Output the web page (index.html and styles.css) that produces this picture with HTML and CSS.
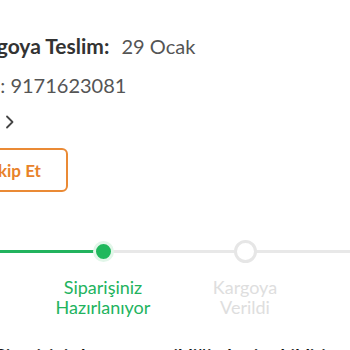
FILE: index.html
```html
<!DOCTYPE html>
<html>

<head>
  <title>Sipariş Detayı</title>
  <meta charset="UTF-8">
  <meta name="viewport" content="width=device-width, initial-scale=1.0">
  <link rel="stylesheet" href="styles.css">
</head>

<body>
  <div class="order">
    <div class="info">
      <p class="row row-date"><b>Kargoya Teslim:</b> 29 Ocak</p>
      <p class="row row-no">No: 9171623081</p>
      <div class="row row-more">
        <svg width="10" height="14" viewBox="0 0 10 14">
          <path d="M2 1.5 L7.5 7 L2 12.5" fill="none" stroke="#444" stroke-width="1.8" stroke-linecap="round" stroke-linejoin="round" />
        </svg>
      </div>
      <button class="track">Takip Et</button>
    </div>

    <ol class="steps">
      <li class="step done"><span class="dot"></span><span class="label">Sipariş<br>Alındı</span></li>
      <li class="step current"><span class="dot"></span><span class="label">Siparişiniz<br>Hazırlanıyor</span></li>
      <li class="step"><span class="dot"></span><span class="label">Kargoya<br>Verildi</span></li>
      <li class="step"><span class="dot"></span><span class="label">Teslim<br>Edildi</span></li>
    </ol>

    <p class="note">Siparişiniz kargoya verildiğinde size bildirim göndereceğiz.</p>
  </div>
</body>

</html>
```

FILE: styles.css
```css
body {
  margin: 0;
  padding: 0;
  background-color: #fff;
  font-family: Lato, "Open Sans", sans-serif;
  overflow: hidden;
}

.order {
  width: 350px;
  height: 350px;
  overflow: hidden;
}

.info {
  margin-left: -28px;
  padding-top: 34px;
}

.row {
  margin: 0;
  color: #555;
}

.row-date {
  font-size: 20px;
  line-height: 24px;
  text-indent: -8px;
}

.row-date b {
  color: #333;
  font-size: 21px;
  font-weight: bold;
  margin-right: 7px;
}

.row-no {
  margin-top: 14px;
  font-size: 20px;
  line-height: 26px;
  text-indent: 2px;
}

.row-more {
  margin-top: 17px;
  height: 20px;
  padding-left: 33px;
}

.row-more svg {
  display: block;
}

.track {
  display: block;
  margin-top: 13px;
  height: 44px;
  padding: 0 25px 0 7px;
  border: 2px solid #ea8a35;
  border-radius: 6px;
  background-color: #fff;
  color: #e8822a;
  font-family: inherit;
  font-size: 17px;
  font-weight: bold;
}

.steps {
  list-style: none;
  margin: 47px 0 0 -110px;
  padding: 0;
  display: grid;
  grid-template-columns: repeat(4, 142px);
}

.step {
  position: relative;
  display: flex;
  flex-direction: column;
  align-items: center;
}

.step::before,
.step::after {
  content: "";
  position: absolute;
  top: 11px;
  height: 3px;
  width: 50%;
  background-color: #e8e8e8;
}

.step::before {
  left: 0;
}

.step::after {
  right: 0;
}

.step.done::before,
.step.done::after,
.step.current::before {
  background-color: #22b35e;
}

.dot {
  position: relative;
  z-index: 1;
  box-sizing: border-box;
  width: 23px;
  height: 23px;
  margin: 1px 0 0;
  border: 3.5px solid #e6e6e6;
  border-radius: 50%;
  background-color: #fff;
}

.step.done .dot,
.step.current .dot {
  width: 21px;
  height: 21px;
  margin: 2px 0 1px;
  border: 3px solid #e2f6e9;
  background-color: #1fb85c;
}

.label {
  margin-top: 14px;
  font-size: 18px;
  line-height: 20px;
  text-align: center;
  color: #dedede;
}

.step.done .label,
.step.current .label {
  color: #22b35e;
}

.note {
  margin: 27px 0 0 -4px;
  font-size: 18px;
  line-height: 24px;
  font-weight: bold;
  color: #111;
  white-space: nowrap;
}
```
